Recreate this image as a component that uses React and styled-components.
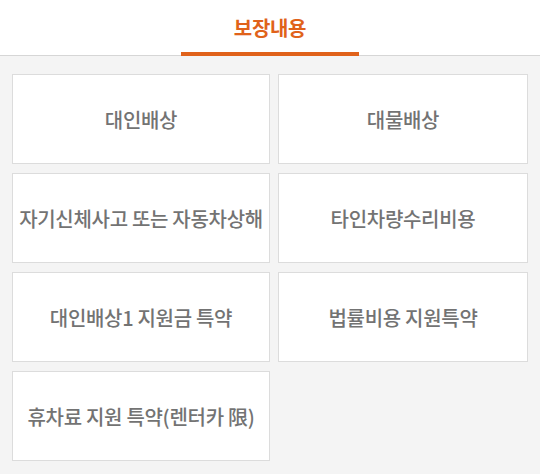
import React from 'react';
import styled, { createGlobalStyle } from 'styled-components';

const GlobalStyle = createGlobalStyle`
  html, body {
    margin: 0;
    padding: 0;
    background: #f4f4f4;
    font-family: "Noto Sans CJK KR", "Noto Sans", sans-serif;
  }
`;

const Page = styled.div`
  width: 540px;
  height: 474px;
  background: #f4f4f4;
`;

const TabBar = styled.div`
  height: 55px;
  background: #fff;
  border-bottom: 1px solid #d6d6d6;
  display: flex;
  justify-content: center;
`;

const Tab = styled.div`
  width: 178px;
  display: flex;
  align-items: center;
  justify-content: center;
  font-size: 20px;
  font-weight: 700;
  color: #e0621a;
  letter-spacing: -0.3px;
  border-bottom: 4px solid #e0621a;
  padding-top: 2px;
  margin-bottom: -1px;
  box-sizing: border-box;
`;

const Grid = styled.div`
  display: grid;
  grid-template-columns: 258px 250px;
  grid-auto-rows: 90px;
  column-gap: 8px;
  row-gap: 9px;
  padding: 18px 12px 13px;
`;

const Card = styled.div`
  background: #fff;
  border: 1px solid #dcdcdc;
  display: flex;
  align-items: center;
  justify-content: center;
  font-size: 20px;
  font-weight: 500;
  color: #737373;
  letter-spacing: -0.3px;
  white-space: nowrap;
`;

const items = [
  '대인배상',
  '대물배상',
  '자기신체사고 또는 자동차상해',
  '타인차량수리비용',
  '대인배상1 지원금 특약',
  '법률비용 지원특약',
  '휴차료 지원 특약(렌터카 限)',
];

function App() {
  return (
    <Page>
      <GlobalStyle />
      <TabBar>
        <Tab>보장내용</Tab>
      </TabBar>
      <Grid>
        {items.map((item) => (
          <Card key={item}>{item}</Card>
        ))}
      </Grid>
    </Page>
  );
}

export default App;
